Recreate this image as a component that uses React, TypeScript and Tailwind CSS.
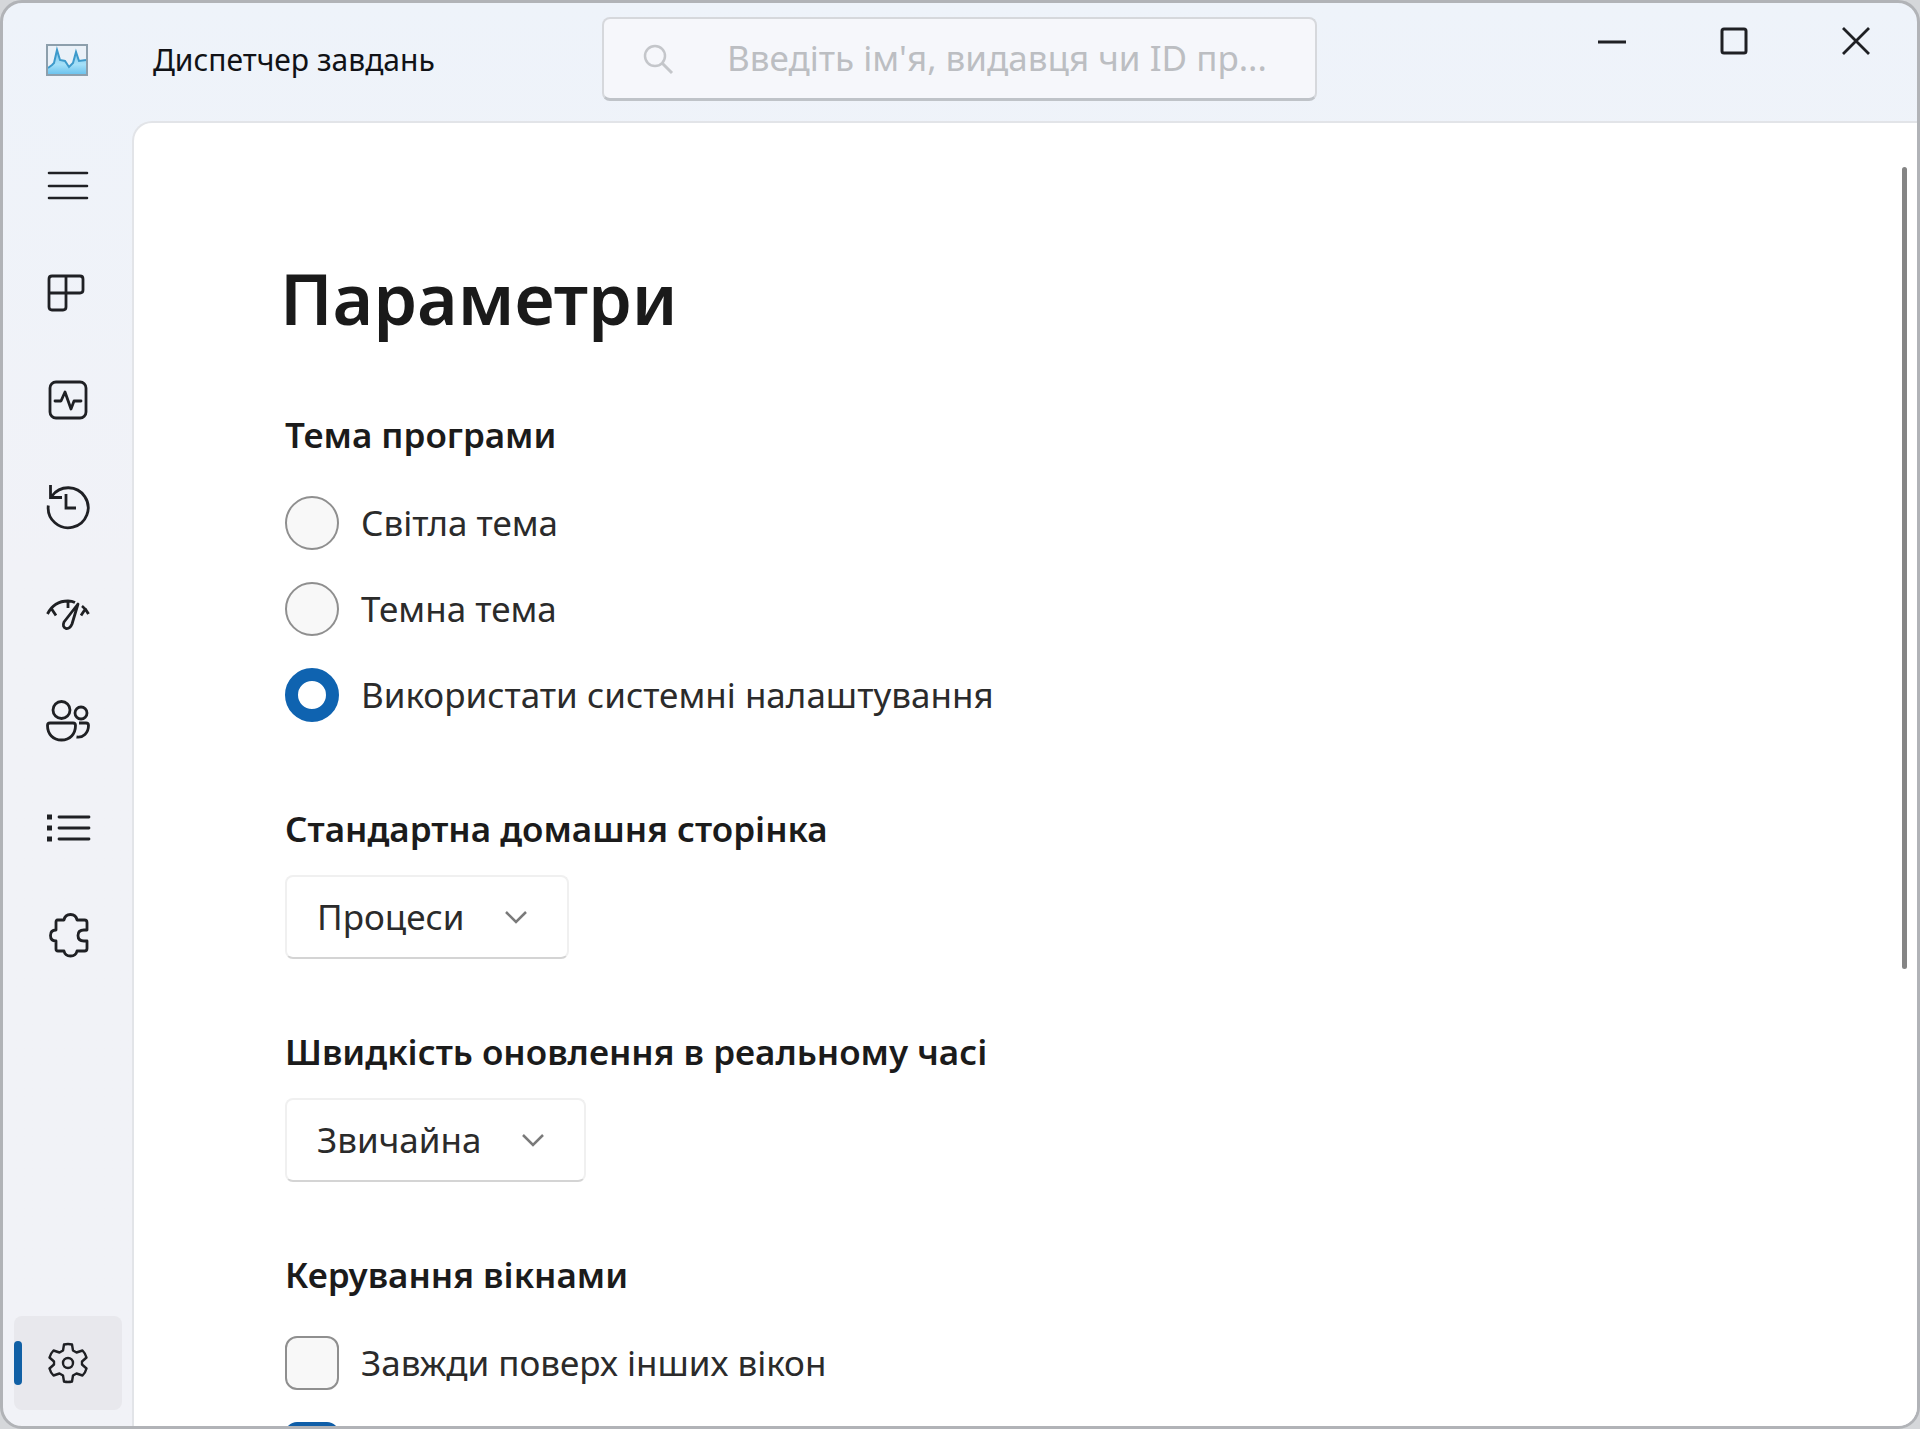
import React from 'react';

const iconClass = 'overflow-visible fill-none stroke-[#1f2024]';

function AppLogo() {
    return (
        <svg width="42" height="32" viewBox="0 0 42 32" className="fill-none">
            <defs>
                <linearGradient id="logoFill" x1="0" y1="0" x2="0" y2="1">
                    <stop offset="0" stopColor="#7cc4e8" />
                    <stop offset="0.6" stopColor="#a5e0f8" />
                    <stop offset="1" stopColor="#6cc3ee" />
                </linearGradient>
            </defs>
            <rect x="1" y="1" width="40" height="30" fill="#eaf1f8" />
            <path
                d="M2 24L6 21L8 19L11 6L14 16L19 17L23 23L27 19L30 8L33 17L40 16V30H2Z"
                fill="url(#logoFill)"
            />
            <path
                d="M2 24L6 21L8 19L11 6L14 16L19 17L23 23L27 19L30 8L33 17L40 16"
                stroke="#3d9acb"
                strokeWidth="2"
            />
            <rect
                x="1"
                y="1"
                width="40"
                height="30"
                stroke="#8d9fac"
                strokeWidth="2"
            />
        </svg>
    );
}

function MenuIcon() {
    return (
        <svg width="44" height="44" viewBox="0 0 44 44" className={iconClass}>
            <path
                d="M3 9H41M3 22H41M3 34H41"
                strokeWidth="2.6"
                strokeLinecap="round"
            />
        </svg>
    );
}

function ProcessesIcon() {
    return (
        <svg width="44" height="44" viewBox="0 0 44 44" className={iconClass}>
            <path
                d="M6 5H34Q37 5 37 8V19Q37 22 34 22H3M20 5V36Q20 39 17 39H6Q3 39 3 36V8Q3 5 6 5"
                strokeWidth="2.8"
                strokeLinejoin="round"
            />
        </svg>
    );
}

function PerformanceIcon() {
    return (
        <svg width="44" height="44" viewBox="0 0 44 44" className={iconClass}>
            <rect x="4" y="4" width="36" height="36" rx="6" strokeWidth="2.8" />
            <path
                d="M9 23H15L19 14L25 31L28 23H35"
                strokeWidth="2.8"
                strokeLinejoin="round"
                strokeLinecap="round"
            />
        </svg>
    );
}

function HistoryIcon() {
    return (
        <svg width="44" height="44" viewBox="0 0 44 44" className={iconClass}>
            <path
                d="M2.3 20.5A20 20 0 1 0 6 11M4.5 0V12.5H16M20 9V23H30"
                strokeWidth="2.8"
            />
        </svg>
    );
}

function StartupIcon() {
    return (
        <svg width="44" height="44" viewBox="0 0 44 44" className={iconClass}>
            <path
                d="M1.5 22Q8 9 22 9Q26 9 29 10.5M36 14Q40 17 42.5 22M22 9V16M5 16L10 23.5M40 16L35 23.5"
                strokeWidth="2.8"
            />
            <path
                d="M32 12L18 30Q16 35 20 36.5Q24 37 26 32L32 12Z"
                strokeWidth="2.8"
                strokeLinejoin="round"
            />
        </svg>
    );
}

function UsersIcon() {
    return (
        <svg width="44" height="44" viewBox="0 0 44 44" className={iconClass}>
            <g strokeWidth="2.8" strokeLinejoin="round">
                <circle cx="15.5" cy="11" r="8.5" />
                <circle cx="35" cy="14" r="6" />
                <path d="M4 24H27Q29.500 24 29.500 26.500C29.500 35 24 41 15.500 41S1.500 35 1.500 26.500Q1.500 24 4 24Z" />
                <path d="M33 24H40Q42.500 24 42.500 26.500C42.500 34 37 39 30.500 38" />
            </g>
        </svg>
    );
}

function DetailsIcon() {
    return (
        <svg width="44" height="44" viewBox="0 0 44 44" className={iconClass}>
            <path
                d="M13 11H43M13 22H43M13 33H43"
                strokeWidth="2.8"
                strokeLinecap="round"
            />
            <path d="M1 11H6M1 22H6M1 33H6" strokeWidth="5" />
        </svg>
    );
}

function ServicesIcon() {
    return (
        <svg width="44" height="44" viewBox="0 0 44 44" className={iconClass}>
            <path
                d="M11.500 7H18Q19 1.500 24.500 1.500T31 7H38.500Q41 7 41 9.500V17H38Q32 17 32 22.500T38 28H41V35.500Q41 38 38.500 38H31Q30 43 24.500 43T18 38H12Q10 38 10 36V28Q4.500 28 4.500 22.500T10 17V9Q10 7 11.500 7Z"
                strokeWidth="2.8"
                strokeLinejoin="round"
            />
        </svg>
    );
}

function SettingsIcon() {
    return (
        <svg width="44" height="44" viewBox="0 0 44 44" className={iconClass}>
            <g strokeWidth="2.4" strokeLinejoin="round">
                <path d="M18 3.500Q22 2.500 26 3.500L27 9.500L30.500 11.500L36.500 9.500Q39.500 12.500 40.500 16.500L36 20.500V23.500L40.500 27.500Q39.500 31.500 36.500 34.500L30.500 32.500L27 34.500L26 40.500Q22 41.500 18 40.500L17 34.500L13.500 32.500L7.500 34.500Q4.500 31.500 3.500 27.500L8 23.500V20.500L3.500 16.500Q4.500 12.500 7.500 9.500L13.500 11.500L17 9.500Z" />
                <circle cx="22" cy="22" r="5" />
            </g>
        </svg>
    );
}

const navItems = [
    { label: 'Процеси', Icon: ProcessesIcon },
    { label: 'Продуктивність', Icon: PerformanceIcon },
    { label: 'Журнал програм', Icon: HistoryIcon },
    { label: 'Автозавантаження', Icon: StartupIcon },
    { label: 'Користувачі', Icon: UsersIcon },
    { label: 'Відомості', Icon: DetailsIcon },
    { label: 'Служби', Icon: ServicesIcon },
];

const themes = [
    { id: 'light', label: 'Світла тема' },
    { id: 'dark', label: 'Темна тема' },
    { id: 'system', label: 'Використати системні налаштування' },
];

function TitleBar() {
    return (
        <header className="flex h-[118px] shrink-0 items-start">
            <div className="flex h-[114px] w-[599px] shrink-0 items-center pl-[43px]">
                <AppLogo />
                <p className="ml-[65px] text-[30px] leading-10 text-[#111216]">
                    Диспетчер завдань
                </p>
            </div>
            <div className="mt-[14px] flex h-[84px] w-[715px] items-center rounded-lg border-2 border-b-[3px] border-[#d6d8dc] border-b-[#bfc3c8] bg-[#f6f7fb]">
                <svg
                    width="32"
                    height="32"
                    viewBox="0 0 32 32"
                    className="ml-[38px] shrink-0 fill-none stroke-[#c4c6ca]"
                >
                    <circle cx="13" cy="13" r="10" strokeWidth="2.5" />
                    <path d="M20 20L30 30" strokeWidth="3" />
                </svg>
                <input
                    type="text"
                    aria-label="Пошук"
                    placeholder="Введіть ім'я, видавця чи ID пр..."
                    className="ml-[53px] min-w-0 flex-1 bg-transparent text-[35px] outline-none placeholder:text-[#bcbec2]"
                />
            </div>
            <div className="ml-auto flex">
                <button
                    type="button"
                    aria-label="Згорнути"
                    className="flex h-[76px] w-[122px] items-center justify-center"
                >
                    <svg width="28" height="28" viewBox="0 0 28 28" className={iconClass}>
                        <path d="M0 15H28" strokeWidth="3" />
                    </svg>
                </button>
                <button
                    type="button"
                    aria-label="Розгорнути"
                    className="flex h-[76px] w-[122px] items-center justify-center"
                >
                    <svg width="28" height="28" viewBox="0 0 28 28" className={iconClass}>
                        <rect x="2" y="2" width="24" height="24" rx="2" strokeWidth="3" />
                    </svg>
                </button>
                <button
                    type="button"
                    aria-label="Закрити"
                    className="flex h-[76px] w-[122px] items-center justify-center"
                >
                    <svg width="28" height="28" viewBox="0 0 28 28" className={iconClass}>
                        <path d="M1 1L27 27M27 1L1 27" strokeWidth="2.8" />
                    </svg>
                </button>
            </div>
        </header>
    );
}

function Sidebar() {
    return (
        <nav className="flex w-[129px] shrink-0 flex-col items-center pt-3 pb-4">
            <button
                type="button"
                aria-label="Меню"
                className="flex h-[106px] w-[108px] items-center justify-center"
            >
                <MenuIcon />
            </button>
            {navItems.map(({ label, Icon }) => (
                <button
                    key={label}
                    type="button"
                    aria-label={label}
                    className="flex h-[107px] w-[108px] items-center justify-center"
                >
                    <Icon />
                </button>
            ))}
            <button
                type="button"
                aria-label="Параметри"
                className="relative mt-auto flex h-[94px] w-[108px] items-center justify-center rounded-lg bg-[#e8e8ed]"
            >
                <span className="absolute left-0 h-[44px] w-2 rounded-full bg-[#1160a5]" />
                <SettingsIcon />
            </button>
        </nav>
    );
}

function SelectField({
    id,
    label,
    options,
}: {
    id: string;
    label: string;
    options: string[];
}) {
    return (
        <section className="mt-[69px]">
            <label
                htmlFor={id}
                className="block text-[35px] leading-12 font-semibold text-[#1b1b1b]"
            >
                {label}
            </label>
            <div className="relative mt-[22px] w-fit">
                <select
                    id={id}
                    className="h-[84px] appearance-none rounded-lg border-2 border-[#f0f0f0] border-b-[#d4d4d4] bg-white pr-[102px] pl-[30px] text-[35px] text-[#2b2b2b]"
                >
                    {options.map((option) => (
                        <option key={option}>{option}</option>
                    ))}
                </select>
                <svg
                    width="24"
                    height="14"
                    viewBox="0 0 24 14"
                    className="pointer-events-none absolute top-[35px] right-[41px] fill-none stroke-[#7a7a7a]"
                >
                    <path d="M2 2L12 12L22 2" strokeWidth="2.5" />
                </svg>
            </div>
        </section>
    );
}

export default function App() {
    return (
        <div className="h-screen bg-[#d5d7da] font-['Noto_Sans',sans-serif]">
            <div className="flex h-full flex-col overflow-hidden rounded-[22px] border-[3px] border-[#b1b3b7] bg-linear-to-b from-[#eef3fa] to-[#f1f2f7] to-40%">
                <TitleBar />
                <div className="flex min-h-0 flex-1">
                    <Sidebar />
                    <main className="relative min-w-0 flex-1 overflow-hidden rounded-tl-[20px] border-t-2 border-l-2 border-[#e2e4e8] bg-white pt-[128px] pl-[146px]">
                        <h1 className="text-[70px] leading-[94px] font-semibold text-[#1a1a1a]">
                            Параметри
                        </h1>

                        <div className="pl-[5px]">
                            <fieldset className="mt-[66px] pb-[14px]">
                                <legend className="text-[35px] leading-12 font-semibold text-[#1b1b1b]">
                                    Тема програми
                                </legend>
                                <div className="mt-[37px] flex flex-col gap-8">
                                    {themes.map((theme) => (
                                        <label
                                            key={theme.id}
                                            className="flex h-[54px] items-center gap-[22px] text-[35px] text-[#2b2b2b]"
                                        >
                                            <input
                                                type="radio"
                                                name="theme"
                                                value={theme.id}
                                                defaultChecked={theme.id === 'system'}
                                                className="size-[54px] shrink-0 appearance-none rounded-full border-2 border-[#8f8f8f] bg-[#f8f8f8] checked:border-[13px] checked:border-[#0f63b0] checked:bg-white"
                                            />
                                            {theme.label}
                                        </label>
                                    ))}
                                </div>
                            </fieldset>

                            <SelectField
                                id="start-page"
                                label="Стандартна домашня сторінка"
                                options={['Процеси']}
                            />
                            <SelectField
                                id="update-speed"
                                label="Швидкість оновлення в реальному часі"
                                options={['Звичайна']}
                            />

                            <fieldset className="mt-[69px]">
                                <legend className="text-[35px] leading-12 font-semibold text-[#1b1b1b]">
                                    Керування вікнами
                                </legend>
                                <div className="mt-[37px] flex flex-col gap-8">
                                    <label className="flex h-[54px] items-center gap-[22px] text-[35px] text-[#2b2b2b]">
                                        <input
                                            type="checkbox"
                                            className="size-[54px] shrink-0 appearance-none rounded-xl border-2 border-[#8f8f8f] bg-[#f8f8f8]"
                                        />
                                        Завжди поверх інших вікон
                                    </label>
                                    <input
                                        type="checkbox"
                                        defaultChecked
                                        aria-label="Згорнути під час використання"
                                        className="size-[54px] shrink-0 appearance-none rounded-xl bg-[#0f5ea8]"
                                    />
                                </div>
                            </fieldset>
                        </div>

                        <div className="absolute top-[44px] right-2.5 h-[802px] w-[5px] rounded-full bg-[#858585]" />
                    </main>
                </div>
            </div>
        </div>
    );
}
